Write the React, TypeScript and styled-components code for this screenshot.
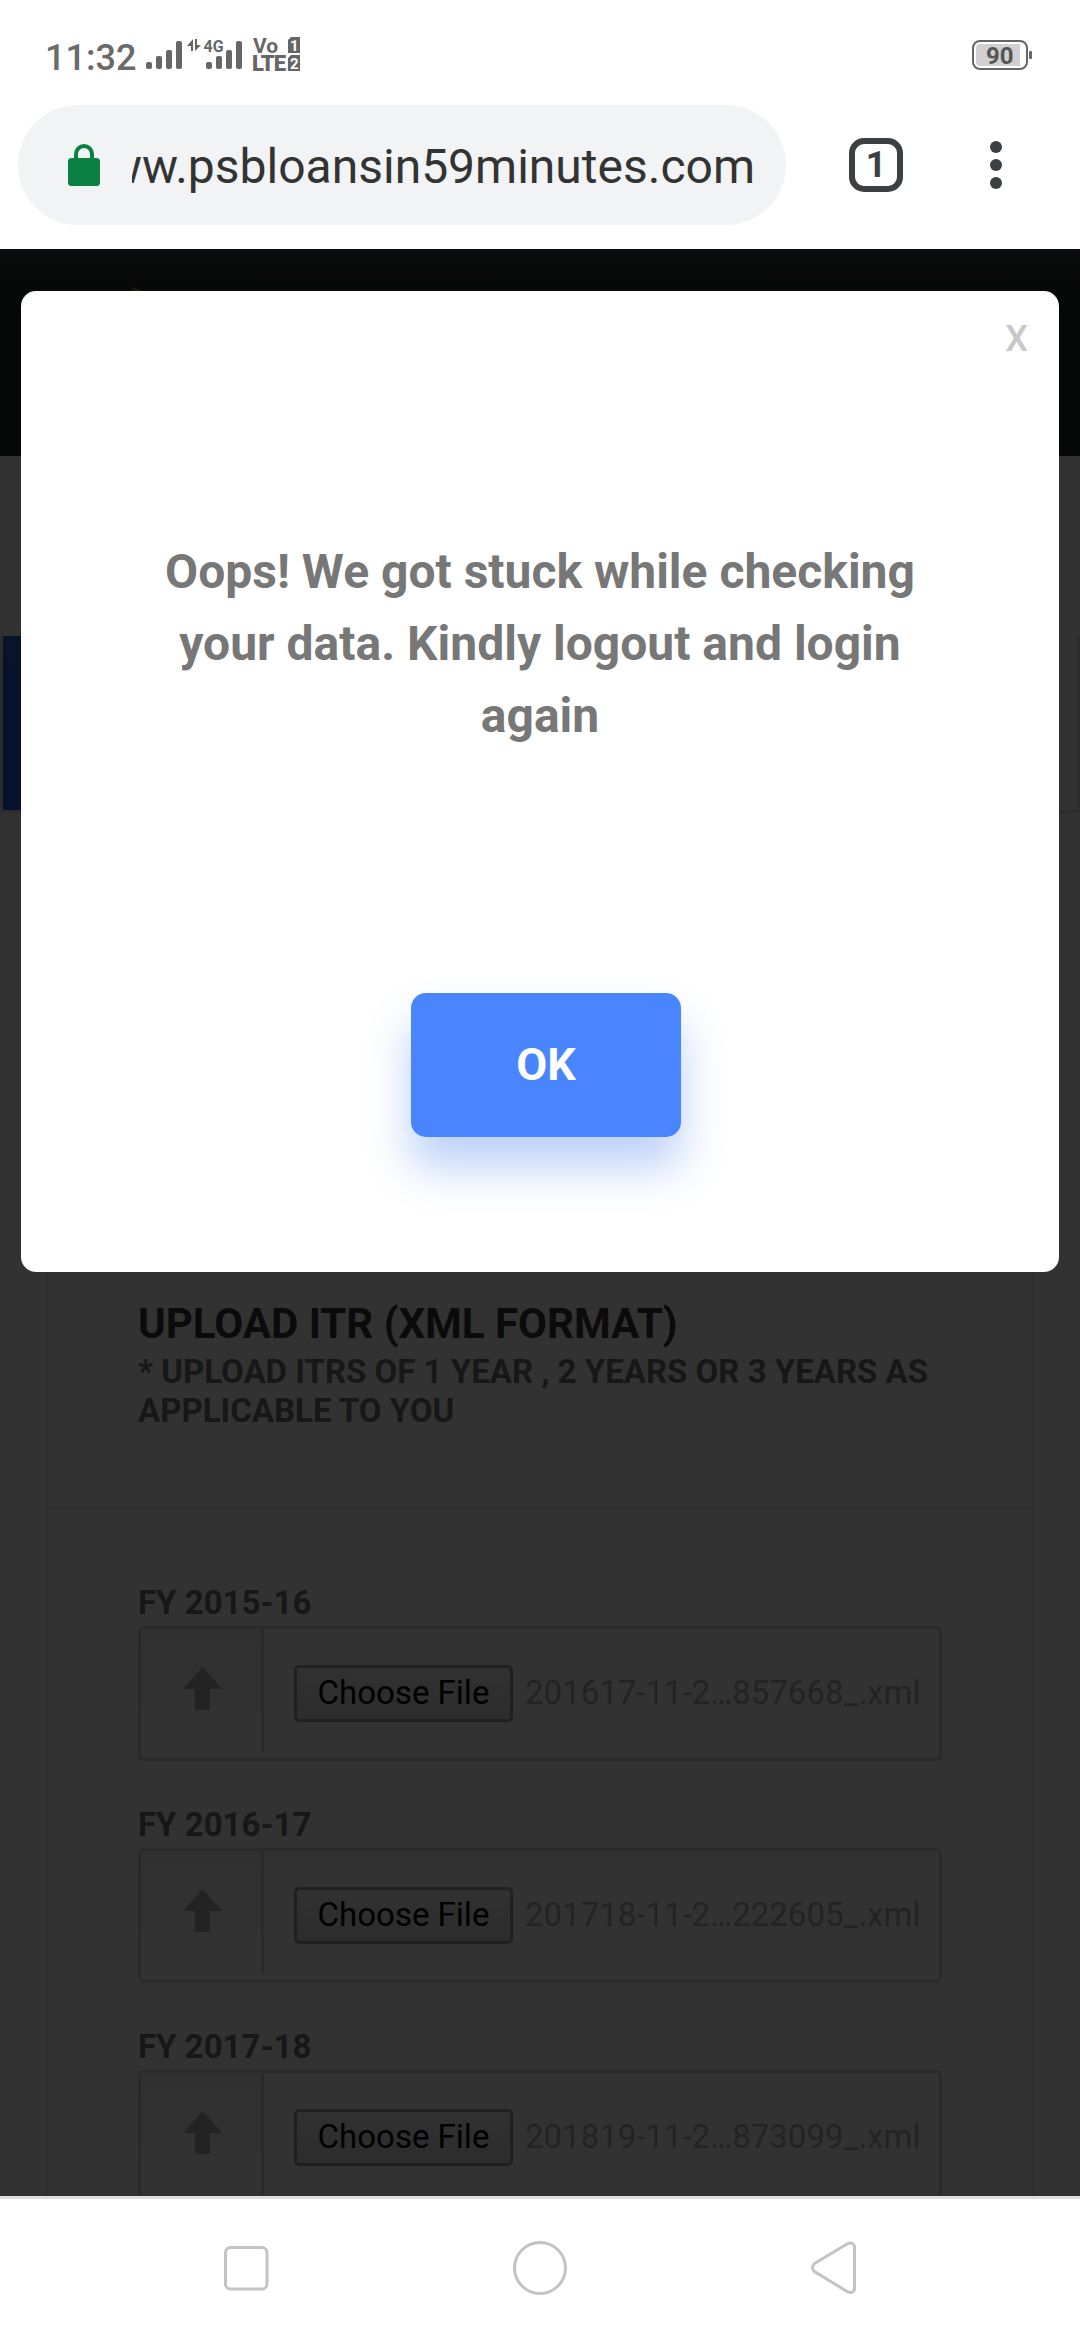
import React from "react";
import styled, { createGlobalStyle } from "styled-components";

const GlobalStyle = createGlobalStyle`
  *, *::before, *::after { box-sizing: border-box; }
  body {
    margin: 0;
    background: #fff;
    font-family: Roboto, "Liberation Sans", sans-serif;
  }
`;

const Phone = styled.div`
  width: 1080px;
  height: 2340px;
  display: flex;
  flex-direction: column;
  overflow: hidden;
  background: #fff;
`;

const StatusBar = styled.header`
  height: 105px;
  flex: none;
  display: flex;
  align-items: flex-start;
  padding: 30px 47px 0 45px;
`;

const Clock = styled.span`
  width: 100px;
  margin-top: 7px;
  font-size: 36px;
  line-height: 42px;
  font-weight: 500;
  color: #6a6a6a;
  white-space: nowrap;
`;

const SignalIcons = styled.svg`
  display: block;
  font-family: Roboto, sans-serif;
  fill: #666;
`;

const BatteryIcon = styled.svg`
  display: block;
  margin: 6px 0 0 auto;
  font-family: Roboto, sans-serif;
`;

const Toolbar = styled.div`
  height: 144px;
  flex: none;
  display: flex;
  align-items: flex-start;
  padding-left: 18px;
`;

const AddressPill = styled.div`
  width: 768px;
  height: 120px;
  border-radius: 60px;
  background: #f1f3f4;
  display: flex;
  align-items: center;
  padding: 0 31px 0 50px;
`;

const Address = styled.div`
  flex: 1;
  margin: 3px 0 0 32px;
  display: flex;
  justify-content: flex-end;
  overflow: hidden;
  font-size: 48px;
  line-height: 60px;
  color: #333;
  white-space: nowrap;
`;

const TabCount = styled.div`
  width: 54px;
  height: 54px;
  margin: 33px 0 0 63px;
  border: 6px solid #3c4043;
  border-radius: 15px;
  display: flex;
  align-items: center;
  justify-content: center;
  font-size: 36px;
  line-height: 42px;
  font-weight: 700;
  color: #3c4043;
`;

const MenuDots = styled.div`
  margin: 36px 0 0 87px;
  display: grid;
  gap: 6px;
`;

const Dot = styled.i`
  width: 12px;
  height: 12px;
  border-radius: 50%;
  background: #3c4043;
`;

const Viewport = styled.main`
  position: relative;
  height: 1947px;
  flex: none;
  overflow: hidden;
  background: #fafafa;
`;

const SiteHeader = styled.div`
  height: 207px;
  padding: 38px 0 0 131px;
  background: linear-gradient(#373c46 0, #28302c 24px, #1e2823 100%);
`;

const Steps = styled.div`
  height: 177px;
  margin-top: 180px;
  border: 3px solid #dcdcdc;
  border-top: 0;
  display: flex;
`;

const ActiveStep = styled.div`
  width: 260px;
  background: linear-gradient(#2864c8, #1e5fe6 40%, #195fe6);
`;

const Card = styled.section`
  width: 990px;
  margin: 120px 0 0 45px;
  border: 3px solid #e6e6e6;
`;

const CardHead = styled.div`
  height: 573px;
  padding: 0 90px 59px;
  display: flex;
  flex-direction: column;
  justify-content: flex-end;
  border-bottom: 3px solid #e4e4e4;
`;

const Title = styled.h2`
  margin: 0;
  font-size: 42px;
  line-height: 50px;
  font-weight: 700;
  color: #373737;
  white-space: nowrap;
`;

const Note = styled.p`
  margin: 3px 0 17px;
  font-size: 33px;
  line-height: 39px;
  font-weight: 700;
  color: #737373;
`;

const UploadList = styled.div`
  padding: 72px 90px 0;
`;

const UploadField = styled.div`
  height: 222px;
`;

const Label = styled.div`
  height: 45px;
  font-size: 33px;
  line-height: 43px;
  font-weight: 700;
  color: #737373;
`;

const FileBox = styled.div`
  width: 804px;
  height: 135px;
  border: 3px solid #d2d2d2;
  border-radius: 6px;
  display: flex;
  align-items: flex-start;
`;

const ArrowCell = styled.div`
  width: 123px;
  height: 123px;
  border-right: 3px solid #d2d2d2;
  background: linear-gradient(#f0f0f0, #fafafa);
  padding: 38px 0 0 42px;
`;

const ChooseButton = styled.button`
  width: 219px;
  height: 57px;
  margin: 36px 0 0 30px;
  padding: 0 0 2px;
  border: 3px solid #a0a0a0;
  border-radius: 5px;
  background: linear-gradient(#f5f5f5, #dcdcdc);
  font-family: inherit;
  font-size: 33px;
  line-height: 49px;
  color: #000;
`;

const FileName = styled.span`
  margin: 36px 0 0 12px;
  font-size: 33px;
  line-height: 55px;
  color: #afafaf;
  white-space: nowrap;
`;

const Backdrop = styled.div`
  position: absolute;
  inset: 0;
  background: rgba(0, 0, 0, 0.8);
  padding: 42px 21px;
`;

const Dialog = styled.div`
  height: 981px;
  border-radius: 15px;
  background: #fff;
  display: flex;
  flex-direction: column;
`;

const CloseButton = styled.button`
  align-self: flex-end;
  height: 42px;
  margin: 27px 31px 0 0;
  padding: 0;
  border: 0;
  background: none;
  font-family: inherit;
  font-size: 36px;
  line-height: 42px;
  font-weight: 500;
  color: #c8c8c8;
`;

const Message = styled.p`
  width: 780px;
  margin: 176px auto 0;
  font-size: 48px;
  line-height: 72px;
  font-weight: 700;
  text-align: center;
  color: #777;
`;

const OkButton = styled.button`
  width: 270px;
  height: 144px;
  margin: 241px 0 0 390px;
  padding: 0 0 2px;
  border: 0;
  border-radius: 15px;
  background: #4985ff;
  box-shadow: 0 30px 45px rgba(50, 112, 234, 0.33);
  font-family: inherit;
  font-size: 45px;
  font-weight: 700;
  color: #fff;
`;

const NavBar = styled.nav`
  flex: 1;
  border-top: 3px solid #dedede;
  padding-top: 39px;
  display: flex;
  align-items: flex-start;
  justify-content: center;
`;

const NavIcon = styled.svg`
  display: block;
  width: 60px;
  height: 60px;
  margin: 0 117px;
  fill: none;
  stroke: #c3c3c3;
  stroke-width: 3;
`;

const BARS = [
  { top: 62, height: 7 },
  { top: 56, height: 13 },
  { top: 50, height: 19 },
  { top: 41, height: 28 },
];

const SignalBars = ({ x }: { x: number }) => (
  <>
    {BARS.map((bar, i) => (
      <rect key={i} x={x + i * 10} y={bar.top} width="6" height={bar.height} rx="2" />
    ))}
  </>
);

const UPLOADS = [
  { year: "FY 2015-16", file: "201617-11-2…857668_.xml" },
  { year: "FY 2016-17", file: "201718-11-2…222605_.xml" },
  { year: "FY 2017-18", file: "201819-11-2…873099_.xml" },
];

export default function App() {
  return (
    <>
      <GlobalStyle />
      <Phone>
        <StatusBar>
          <Clock>11:32</Clock>
          <SignalIcons width="160" height="50" viewBox="145 30 160 50">
            <SignalBars x={146} />
            <path d="M187 46l6-7v12h-2v-5zM195 39v12l6-6h-4v-6z" />
            <text x="203.500" y="52" fontSize="16" fontWeight="700">4G</text>
            <SignalBars x={206} />
            <text x="253" y="53" fontSize="21" fontWeight="700">Vo</text>
            <text x="252" y="71" fontSize="22" fontWeight="900" textLength="34">LTE</text>
            <path d="M291 37h9v16h-12V40zM291 55h9v16h-12V58z" />
            <text x="290" y="50.500" fontSize="15" fontWeight="700" fill="#fff">1</text>
            <text x="290" y="68.500" fontSize="15" fontWeight="700" fill="#fff">2</text>
          </SignalIcons>
          <BatteryIcon width="62" height="36" viewBox="971 36 62 36">
            <rect x="973" y="41" width="54" height="28" rx="7" fill="none" stroke="#666" strokeWidth="2" />
            <path d="M980 44h40v22h-40a4 4 0 0 1-4-4v-14a4 4 0 0 1 4-4z" fill="#d0d0d0" />
            <rect x="1029" y="51" width="3" height="8" rx="1" fill="#666" />
            <text x="986" y="64" fontSize="24" fontWeight="700" fill="#555">90</text>
          </BatteryIcon>
        </StatusBar>

        <Toolbar>
          <AddressPill>
            <svg width="32" height="42" viewBox="0 0 32 42">
              <rect y="14" width="32" height="28" rx="3.500" fill="#0b8043" />
              <path d="M8 16V10a8 8 0 0 1 16 0v6" fill="none" stroke="#0b8043" strokeWidth="4" />
            </svg>
            <Address>www.psbloansin59minutes.com</Address>
          </AddressPill>
          <TabCount>1</TabCount>
          <MenuDots>
            <Dot />
            <Dot />
            <Dot />
          </MenuDots>
        </Toolbar>

        <Viewport>
          <SiteHeader>
            <svg width="60" height="60" viewBox="0 0 60 60">
              <path d="M1 0L46 15L30 50L0 12z" fill="#6e8c3c" />
            </svg>
          </SiteHeader>
          <Steps>
            <ActiveStep />
          </Steps>
          <Card>
            <CardHead>
              <Title>UPLOAD ITR (XML FORMAT)</Title>
              <Note>* UPLOAD ITRS OF 1 YEAR , 2 YEARS OR 3 YEARS AS APPLICABLE TO YOU</Note>
            </CardHead>
            <UploadList>
              {UPLOADS.map((u) => (
                <UploadField key={u.year}>
                  <Label>{u.year}</Label>
                  <FileBox>
                    <ArrowCell>
                      <svg width="39" height="43" viewBox="0 0 39 43">
                        <path d="M19.500 0L39 22H27V43H12V22H0z" fill="#afafaf" />
                      </svg>
                    </ArrowCell>
                    <ChooseButton>Choose File</ChooseButton>
                    <FileName>{u.file}</FileName>
                  </FileBox>
                </UploadField>
              ))}
            </UploadList>
          </Card>
          <Backdrop>
            <Dialog role="dialog">
              <CloseButton>X</CloseButton>
              <Message>Oops! We got stuck while checking your data. Kindly logout and login again</Message>
              <OkButton>OK</OkButton>
            </Dialog>
          </Backdrop>
        </Viewport>

        <NavBar>
          <NavIcon viewBox="216 2238 60 60">
            <rect x="225.500" y="2247.500" width="41.500" height="41.500" rx="5" />
          </NavIcon>
          <NavIcon viewBox="510 2238 60 60">
            <circle cx="540" cy="2268" r="25.500" />
          </NavIcon>
          <NavIcon viewBox="804 2238 60 60">
            <path d="M814.500 2263.500L847 2244Q854.500 2241 854.500 2248V2287.500Q854.500 2294.500 847 2291.500L814.500 2271.500Q810.500 2267.500 814.500 2263.500z" />
          </NavIcon>
        </NavBar>
      </Phone>
    </>
  );
}
